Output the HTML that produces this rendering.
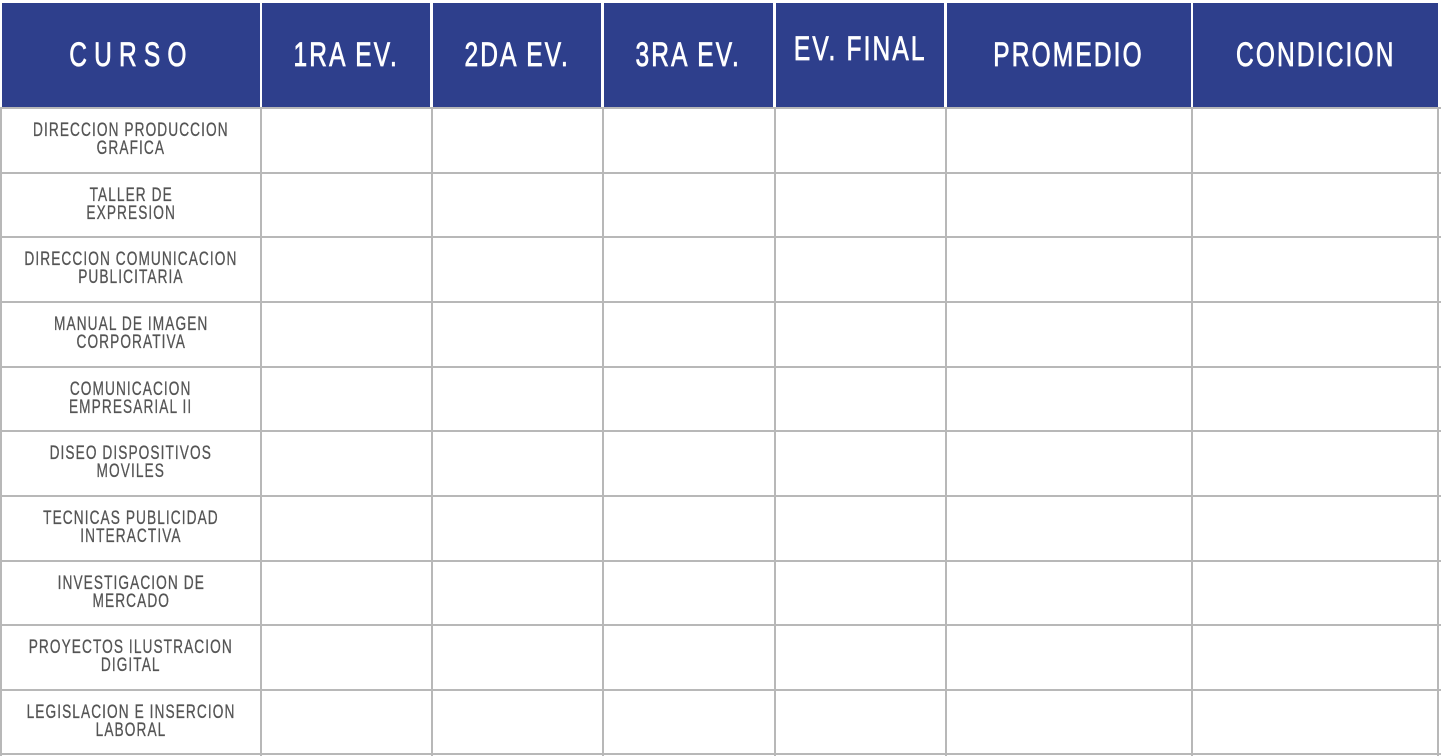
<!DOCTYPE html>
<html><head><meta charset="utf-8"><style>
body{margin:0;width:1441px;height:756px;background:#fff;position:relative;overflow:hidden;font-family:"Liberation Sans",sans-serif}
.h{position:absolute;top:3px;height:105px;background:#2e3f8c;color:#fff;display:flex;align-items:center;justify-content:center;font-size:34px;letter-spacing:3px;white-space:nowrap}
.h span{display:inline-block;transform:scaleX(.72);-webkit-text-stroke:0.8px #fff;white-space:nowrap}
.v{position:absolute;top:108px;height:648px;width:2px;background:#b8b8b8}
.r{position:absolute;left:0;width:1441px;height:2px;background:#b8b8b8}
.c{position:absolute;left:2px;width:258px;height:62px;display:flex;align-items:center;justify-content:center;text-align:center;color:#555;font-size:19px;line-height:18px;letter-spacing:1.5px}
.c span{display:inline-block;transform:scaleX(.72);white-space:nowrap;-webkit-text-stroke:0.3px #555}
</style></head><body>
<div class="h" style="left:2px;width:258px"><span style="letter-spacing:10px">CURSO</span></div>
<div class="h" style="left:262px;width:168px"><span>1RA EV.</span></div>
<div class="h" style="left:433px;width:168px"><span>2DA EV.</span></div>
<div class="h" style="left:604px;width:169px"><span>3RA EV.</span></div>
<div class="h" style="left:776px;width:168px;align-items:flex-start;padding-top:27px;height:78px"><span>EV. FINAL</span></div>
<div class="h" style="left:947px;width:244px"><span>PROMEDIO</span></div>
<div class="h" style="left:1193px;width:245px"><span>CONDICION</span></div>

<div class="v" style="left:0"></div><div class="v" style="left:260px"></div><div class="v" style="left:431px"></div><div class="v" style="left:602px"></div><div class="v" style="left:774px"></div><div class="v" style="left:945px"></div><div class="v" style="left:1191px"></div><div class="v" style="left:1437px"></div>
<div class="r" style="top:107px"></div><div class="r" style="top:172px"></div><div class="r" style="top:236px"></div><div class="r" style="top:301px"></div><div class="r" style="top:366px"></div><div class="r" style="top:430px"></div><div class="r" style="top:495px"></div><div class="r" style="top:560px"></div><div class="r" style="top:624px"></div><div class="r" style="top:689px"></div><div class="r" style="top:753px"></div>

<div class="c" style="top:109px"><span>DIRECCION PRODUCCION<br>GRAFICA</span></div>
<div class="c" style="top:174px"><span>TALLER DE<br>EXPRESION</span></div>
<div class="c" style="top:238px"><span>DIRECCION COMUNICACION<br>PUBLICITARIA</span></div>
<div class="c" style="top:303px"><span>MANUAL DE IMAGEN<br>CORPORATIVA</span></div>
<div class="c" style="top:368px"><span>COMUNICACION<br>EMPRESARIAL II</span></div>
<div class="c" style="top:432px"><span>DISEO DISPOSITIVOS<br>MOVILES</span></div>
<div class="c" style="top:497px"><span>TECNICAS PUBLICIDAD<br>INTERACTIVA</span></div>
<div class="c" style="top:562px"><span>INVESTIGACION DE<br>MERCADO</span></div>
<div class="c" style="top:626px"><span>PROYECTOS ILUSTRACION<br>DIGITAL</span></div>
<div class="c" style="top:691px"><span>LEGISLACION E INSERCION<br>LABORAL</span></div>
</body></html>
